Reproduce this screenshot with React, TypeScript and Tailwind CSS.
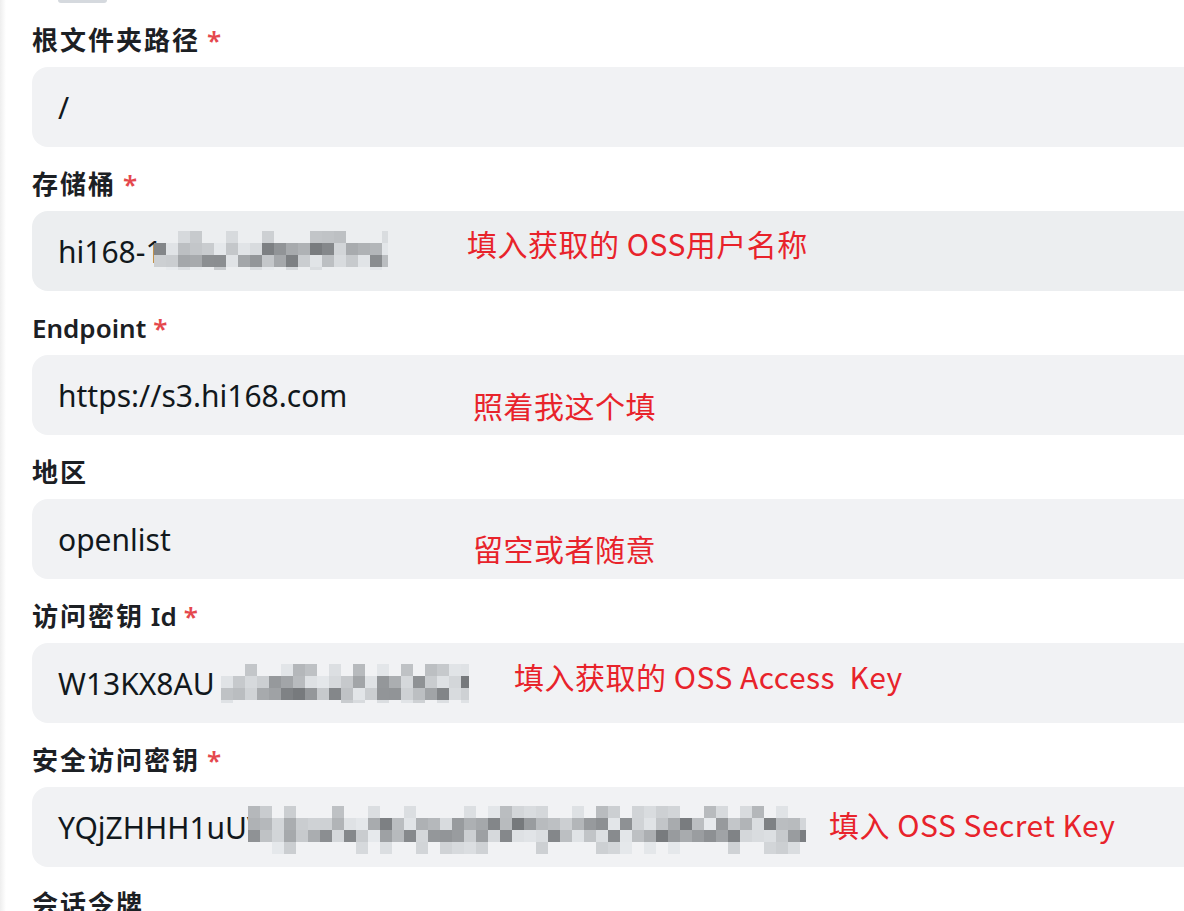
import React from 'react';

function rng(seed: number) {
  let a = seed;
  return () => {
    a = (a + 0x6d2b79f5) | 0;
    let t = Math.imul(a ^ (a >>> 15), 1 | a);
    t = (t + Math.imul(t ^ (t >>> 7), 61 | t)) ^ t;
    return ((t ^ (t >>> 14)) >>> 0) / 4294967296;
  };
}

// mosaic used to hide the secret values
function Pixels({ cols, seed, tall }: { cols: number; seed: number; tall?: boolean }) {
  const rand = rng(seed);
  const rows = [0, 1, 2, 3].map((r) =>
    Array.from({ length: cols }, () => {
      const v = rand();
      if (r === 0) return v < 0.5 ? null : Math.round(0xb4 + rand() * 0x30);
      if (r === 3) return v < 0.7 ? null : Math.round(0xc8 + rand() * 0x20);
      return Math.round(0x74 + Math.pow(v, 0.8) * 0x74);
    })
  );
  return (
    <div className="flex flex-col">
      {rows.map((row, i) => (
        <div key={i} className={`flex ${i === 3 && !tall ? 'h-[3px]' : 'h-3'}`}>
          {row.map((g, j) => (
            <span
              key={j}
              className="w-3 h-full shrink-0"
              style={{ backgroundColor: g === null ? 'transparent' : `rgb(${g},${g + 3},${g + 6})` }}
            />
          ))}
        </div>
      ))}
    </div>
  );
}

function Label({ text }: { text: string }) {
  // CJK glyphs in the original run a little wider than Noto's
  const parts = text.split(/([\u4e00-\u9fff]+)/).filter(Boolean);
  return (
    <>
      {parts.map((p, i) =>
        /[\u4e00-\u9fff]/.test(p) ? (
          <span key={i} className="tracking-[2px]">
            {p}
          </span>
        ) : (
          <span key={i}>{p}</span>
        )
      )}
    </>
  );
}

function Field({
  label,
  required,
  children,
  dark,
}: {
  label: string;
  required?: boolean;
  children?: React.ReactNode;
  dark?: boolean;
}) {
  return (
    <div className="flex flex-col">
      <div className="h-9 leading-9 text-[26px] font-semibold text-[#1c2024] mb-[9px]">
        <Label text={label} />
        {required && <span className="text-[#e5484d] ml-[7px]">*</span>}
      </div>
      <div
        className={`relative h-20 rounded-2xl flex items-center pl-[26px] mb-[19px] text-[30px] text-[#11181c] ${
          dark ? 'bg-[#eceef0]' : 'bg-[#f1f2f4]'
        }`}
      >
        {children}
      </div>
    </div>
  );
}

function Note({ text, className }: { text: string; className: string }) {
  return (
    <span
      className={`absolute whitespace-pre text-[#e8232b] text-[30px] leading-none tracking-[0.5px] ${className}`}
      style={{ fontFamily: '"Noto Sans CJK SC", "Noto Sans", sans-serif' }}
    >
      {text}
    </span>
  );
}

export default function App() {
  return (
    <div className="relative w-full h-[911px] overflow-hidden bg-white">
      <div
        className="w-[1240px] pl-8 pt-[22px]"
        style={{ fontFamily: '"Noto Sans", "Noto Sans CJK SC", sans-serif' }}
      >
        <Field label="根文件夹路径" required>
          <span>/</span>
        </Field>

        <Field label="存储桶" required dark>
          <span>hi168-1</span>
          <div className="-ml-[9px] mt-[-1px] w-[234px] overflow-hidden">
            <Pixels cols={20} seed={7} />
          </div>
          <Note text="填入获取的 OSS用户名称" className="left-[435px] top-[17px]" />
        </Field>

        <Field label="Endpoint" required>
          <span>https://s3.hi168.com</span>
          <Note text="照着我这个填" className="left-[441px] top-[35px]" />
        </Field>

        <Field label="地区">
          <span>openlist</span>
          <Note text="留空或者随意" className="left-[441px] top-[34px]" />
        </Field>

        <Field label="访问密钥 Id" required>
          <span>W13KX8AU</span>
          <div className="ml-[6px] w-[248px] overflow-hidden">
            <Pixels cols={21} seed={23} />
          </div>
          <Note text="填入获取的 OSS Access  Key" className="left-[482px] top-[18px]" />
        </Field>

        <Field label="安全访问密钥" required>
          <span>YQjZHHH1uUV</span>
          <div className="-ml-[17px] mt-[6px] w-[558px] overflow-hidden">
            <Pixels cols={47} seed={91} tall />
          </div>
          <Note text="填入 OSS Secret Key" className="left-[797px] top-[22px]" />
        </Field>

        <Field label="会话令牌" />
      </div>
      <div className="absolute left-0 top-0 w-[6px] h-full bg-gradient-to-r from-[#eeeeee] to-white" />
      <div className="absolute left-[58px] top-0 w-[49px] h-[3px] rounded-b-full bg-[#d5d9de]" />
    </div>
  );
}
